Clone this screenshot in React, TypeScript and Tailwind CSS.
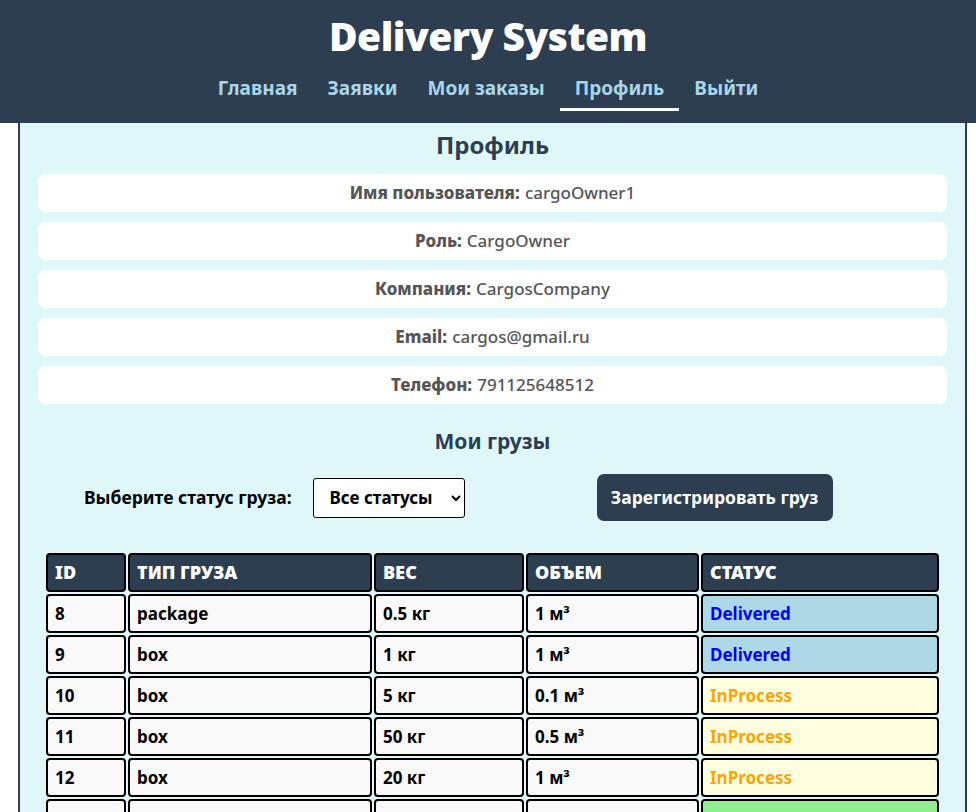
import React from 'react';

const navLinks = ['Главная', 'Заявки', 'Мои заказы', 'Профиль', 'Выйти'];

const profile = [
  { label: 'Имя пользователя:', value: 'cargoOwner1' },
  { label: 'Роль:', value: 'CargoOwner' },
  { label: 'Компания:', value: 'CargosCompany' },
  { label: 'Email:', value: 'cargos@gmail.ru' },
  { label: 'Телефон:', value: '791125648512' },
];

type Cargo = { id: string; type: string; weight: string; volume: string; status: string; label: string };

const cargos: Cargo[] = [
  { id: '8', type: 'package', weight: '0.5 кг', volume: '1 м³', status: 'Delivered', label: 'Delivered' },
  { id: '9', type: 'box', weight: '1 кг', volume: '1 м³', status: 'Delivered', label: 'Delivered' },
  { id: '10', type: 'box', weight: '5 кг', volume: '0.1 м³', status: 'InProcess', label: 'InProcess' },
  { id: '11', type: 'box', weight: '50 кг', volume: '0.5 м³', status: 'InProcess', label: 'InProcess' },
  { id: '12', type: 'box', weight: '20 кг', volume: '1 м³', status: 'InProcess', label: 'InProcess' },
  { id: '', type: '', weight: '', volume: '', status: 'Completed', label: '' },
];

const statusStyle: Record<string, string> = {
  Delivered: 'bg-[#add8e6] text-[#0000ff]',
  InProcess: 'bg-[#ffffe0] text-[#ffa500]',
  Completed: 'bg-[#90ee90] text-[#006400]',
};

const cell = 'h-[39px] rounded-[4px] border-2 border-black px-[7px]';

export default function App() {
  return (
    <div className="min-h-[812px] bg-white font-['Noto_Sans',sans-serif] text-black">
      {/* Header */}
      <header className="h-[123px] bg-[#2c3e50] flex flex-col items-center pt-[11px]">
        <h1 className="text-[39px] leading-[50px] font-black text-white tracking-[-0.5px]">Delivery System</h1>
        <nav className="flex mt-[12px]">
          {navLinks.map((l) => (
            <a
              key={l}
              className={`px-[15px] pt-[2px] pb-[7px] text-[19px] leading-[26px] font-bold text-[#a9d6e8] border-b-[3px] ${
                l === 'Профиль' ? 'border-white' : 'border-transparent'
              }`}
            >
              {l}
            </a>
          ))}
        </nav>
      </header>

      {/* Main */}
      <main className="ml-[18px] w-[949px] border-x-2 border-[#2c3e50] bg-[#e0f7fa] px-[18px] pb-10">
        <h2 className="text-center text-[24px] leading-[30px] font-bold text-[#2c3e50] pt-[7px] pb-[14px]">Профиль</h2>
        <div className="flex flex-col gap-[10px]">
          {profile.map((p) => (
            <div key={p.label} className="h-[38px] rounded-lg bg-white flex items-center justify-center text-[17px] text-[#555]">
              <span className="font-extrabold">{p.label}</span>
              <span className="ml-[5px] font-medium">{p.value}</span>
            </div>
          ))}
        </div>

        <h3 className="text-center text-[21px] leading-[26px] font-bold text-[#2c3e50] mt-[24px]">Мои грузы</h3>

        <div className="flex items-center mt-[20px] pl-[46px]">
          <label className="text-[17.5px] font-bold">Выберите статус груза:</label>
          <select className="ml-[21px] h-[40px] w-[152px] rounded-[3px] border border-black bg-white pl-[12px] pr-[4px] text-[17px] font-bold">
            <option>Все статусы</option>
          </select>
          <button className="ml-[132px] h-[47px] w-[236px] rounded-[7px] bg-[#2c3e50] text-white text-[17.5px] font-bold">
            Зарегистрировать груз
          </button>
        </div>

        <table className="mt-[30px] ml-[6px] table-fixed border-separate border-spacing-[2px] text-[17px] font-bold w-[897px]">
          <thead>
            <tr>
              {[
                ['ID', 'w-[80px]'],
                ['Тип груза', 'w-[244px]'],
                ['Вес', 'w-[150px]'],
                ['Объем', 'w-[173px]'],
                ['Статус', 'w-[238px]'],
              ].map(([h, w]) => (
                <th
                  key={h}
                  className={`${w} ${cell} bg-[#2c3e50] text-left uppercase text-[18px] text-white font-black`}
                >
                  {h}
                </th>
              ))}
            </tr>
          </thead>
          <tbody>
            {cargos.map((c, i) => (
              <tr key={i}>
                <td className={`${cell} bg-[#f9f9f9]`}>{c.id}</td>
                <td className={`${cell} bg-[#f9f9f9]`}>{c.type}</td>
                <td className={`${cell} bg-[#f9f9f9]`}>{c.weight}</td>
                <td className={`${cell} bg-[#f9f9f9]`}>{c.volume}</td>
                <td className={`${cell} ${statusStyle[c.status]}`}>{c.label}</td>
              </tr>
            ))}
          </tbody>
        </table>
      </main>
    </div>
  );
}
